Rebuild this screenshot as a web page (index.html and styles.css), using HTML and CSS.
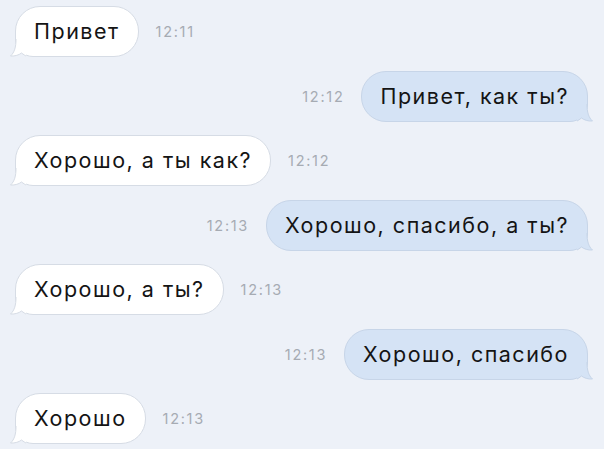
FILE: index.html
```html
<!DOCTYPE html>
<html lang="ru">
<head>
<meta charset="utf-8">
<title>Чат</title>
<link rel="stylesheet" href="styles.css">
</head>
<body>
<div class="chat">
  <div class="row in">
    <div class="bubble">Привет<svg class="tail" viewBox="0 0 16 18"><path class="tf" d="M6 0 C6 8 4.5 13.5 0.5 17 C5 17.3 9 16 11.5 14 C13.5 15.5 15 16.5 16 17 L16 0 Z"/><path class="ts" d="M6 0 C6 8 4.5 13.5 0.5 17 C5 17.3 9 16 11.5 14 C13.5 15.5 15 16.5 16 17"/></svg></div>
    <span class="time">12:11</span>
  </div>
  <div class="row out">
    <span class="time">12:12</span>
    <div class="bubble">Привет, как ты?<svg class="tail" viewBox="0 0 16 18"><path class="tf" d="M10 0 C10 8 11.5 13.5 15.5 17 C11 17.3 7 16 4.5 14 C2.5 15.5 1 16.5 0 17 L0 0 Z"/><path class="ts" d="M10 0 C10 8 11.5 13.5 15.5 17 C11 17.3 7 16 4.5 14 C2.5 15.5 1 16.5 0 17"/></svg></div>
  </div>
  <div class="row in">
    <div class="bubble">Хорошо, а ты как?<svg class="tail" viewBox="0 0 16 18"><path class="tf" d="M6 0 C6 8 4.5 13.5 0.5 17 C5 17.3 9 16 11.5 14 C13.5 15.5 15 16.5 16 17 L16 0 Z"/><path class="ts" d="M6 0 C6 8 4.5 13.5 0.5 17 C5 17.3 9 16 11.5 14 C13.5 15.5 15 16.5 16 17"/></svg></div>
    <span class="time">12:12</span>
  </div>
  <div class="row out">
    <span class="time">12:13</span>
    <div class="bubble">Хорошо, спасибо, а ты?<svg class="tail" viewBox="0 0 16 18"><path class="tf" d="M10 0 C10 8 11.5 13.5 15.5 17 C11 17.3 7 16 4.5 14 C2.5 15.5 1 16.5 0 17 L0 0 Z"/><path class="ts" d="M10 0 C10 8 11.5 13.5 15.5 17 C11 17.3 7 16 4.5 14 C2.5 15.5 1 16.5 0 17"/></svg></div>
  </div>
  <div class="row in">
    <div class="bubble">Хорошо, а ты?<svg class="tail" viewBox="0 0 16 18"><path class="tf" d="M6 0 C6 8 4.5 13.5 0.5 17 C5 17.3 9 16 11.5 14 C13.5 15.5 15 16.5 16 17 L16 0 Z"/><path class="ts" d="M6 0 C6 8 4.5 13.5 0.5 17 C5 17.3 9 16 11.5 14 C13.5 15.5 15 16.5 16 17"/></svg></div>
    <span class="time">12:13</span>
  </div>
  <div class="row out">
    <span class="time">12:13</span>
    <div class="bubble">Хорошо, спасибо<svg class="tail" viewBox="0 0 16 18"><path class="tf" d="M10 0 C10 8 11.5 13.5 15.5 17 C11 17.3 7 16 4.5 14 C2.5 15.5 1 16.5 0 17 L0 0 Z"/><path class="ts" d="M10 0 C10 8 11.5 13.5 15.5 17 C11 17.3 7 16 4.5 14 C2.5 15.5 1 16.5 0 17"/></svg></div>
  </div>
  <div class="row in">
    <div class="bubble">Хорошо<svg class="tail" viewBox="0 0 16 18"><path class="tf" d="M6 0 C6 8 4.5 13.5 0.5 17 C5 17.3 9 16 11.5 14 C13.5 15.5 15 16.5 16 17 L16 0 Z"/><path class="ts" d="M6 0 C6 8 4.5 13.5 0.5 17 C5 17.3 9 16 11.5 14 C13.5 15.5 15 16.5 16 17"/></svg></div>
    <span class="time">12:13</span>
  </div>
</div>
</body>
</html>
```
FILE: styles.css
```css
html, body {
  margin: 0;
  padding: 0;
  background: #edf1f8;
}
body {
  width: 604px;
  height: 449px;
  overflow: hidden;
  font-family: Inter, "Liberation Sans", Arial, sans-serif;
}
.chat {
  display: flex;
  flex-direction: column;
  gap: 13.5px;
  padding: 6px 15px 0 15px;
}
.row {
  display: flex;
  align-items: center;
  gap: 17px;
}
.row.out {
  justify-content: flex-end;
  padding-right: 1px;
}
.bubble {
  position: relative;
  box-sizing: border-box;
  height: 51px;
  display: flex;
  align-items: center;
  padding: 0 18px 1px 18px;
  font-size: 21.5px;
  letter-spacing: 1.5px;
  color: #141414;
  border-radius: 25px;
  white-space: nowrap;
}
.in .bubble {
  background: #ffffff;
  border: 1px solid #d6dce5;
  border-bottom-left-radius: 18px;
}
.out .bubble {
  background: #d5e3f5;
  border: 1px solid #c7d5e8;
  border-bottom-right-radius: 18px;
}
.tail {
  position: absolute;
  bottom: -1px;
  width: 16px;
  height: 18px;
  overflow: visible;
}
.in .tail { left: -6px; }
.out .tail { right: -6px; }
.tf { stroke: none; }
.ts { fill: none; stroke-width: 1; }
.in .tf { fill: #ffffff; }
.in .ts { stroke: #d6dce5; }
.out .tf { fill: #d5e3f5; }
.out .ts { stroke: #c7d5e8; }
.time {
  font-size: 14.5px;
  letter-spacing: 1.7px;
  color: #a6abb3;
}
```
